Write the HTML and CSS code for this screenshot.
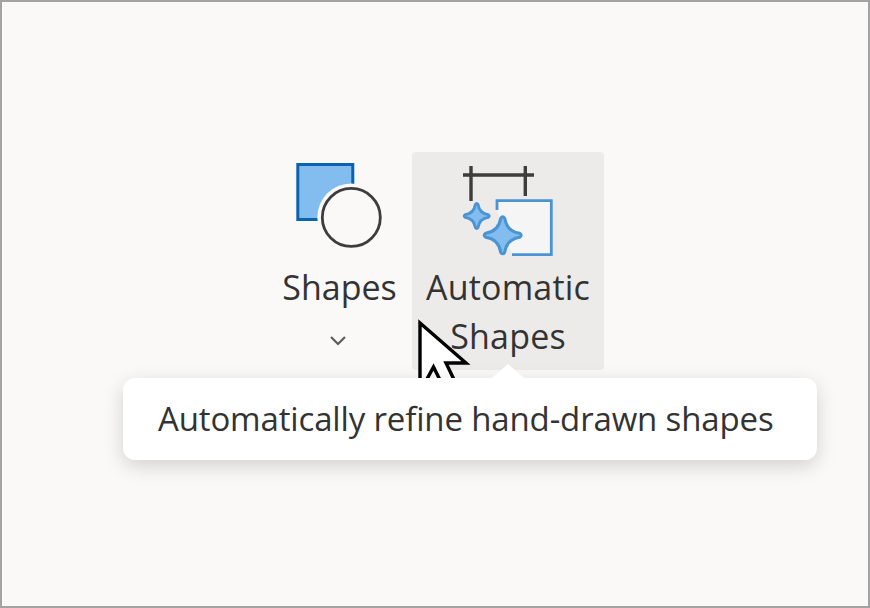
FILE: index.html
```html
<!DOCTYPE html>
<html lang="en">
<head>
    <meta charset="UTF-8">
    <title>Automatic Shapes</title>
    <link rel="stylesheet" href="styles.css">
</head>
<body>

<div class="frame">
    <!-- Ribbon buttons -->
    <div class="ribbon">
        <div class="ribbon-btn shapes-btn">
            <svg class="icon" width="88" height="88" viewBox="0 0 88 88">
                <rect x="1.8" y="2.5" width="55" height="55" fill="#83bcee" stroke="#0a63b0" stroke-width="3"/>
                <circle cx="55.3" cy="55.4" r="34" fill="#faf9f8"/>
                <circle cx="55.3" cy="55.4" r="29" fill="#faf9f8" stroke="#3d3d3d" stroke-width="2.8"/>
            </svg>
            <span class="label">Shapes</span>
            <svg class="chevron" width="18" height="12" viewBox="0 0 18 12">
                <path d="M2 2 L9 9 L16 2" fill="none" stroke="#5c5c5c" stroke-width="2.2"/>
            </svg>
        </div>
        <div class="ribbon-btn auto-btn">
            <svg class="icon" width="96" height="96" viewBox="0 0 96 96">
                <path d="M3 11 H74 M11 2 V37 M65.3 2 V32" fill="none" stroke="#3d3d3d" stroke-width="3.4"/>
                <path d="M37 46 V36.7 H91.3 V90.6 H52" fill="#f5f5f6" stroke="#4a94d2" stroke-width="2.8"/>
                <g fill="#83bcee" stroke="#4a94d2" stroke-linejoin="round">
                    <path transform="translate(16.7 52) scale(.68)" stroke-width="4.2" d="M-2 -17 Q0 -20 2 -17 Q4 -4 17 -2 Q20 0 17 2 Q4 4 2 17 Q0 20 -2 17 Q-4 4 -17 2 Q-20 0 -17 -2 Q-4 -4 -2 -17 Z"/>
                    <path transform="translate(42.7 71.3)" stroke-width="3" d="M-2 -17 Q0 -20 2 -17 Q4 -4 17 -2 Q20 0 17 2 Q4 4 2 17 Q0 20 -2 17 Q-4 4 -17 2 Q-20 0 -17 -2 Q-4 -4 -2 -17 Z"/>
                </g>
            </svg>
            <span class="label">Automatic Shapes</span>
        </div>
    </div>

    <!-- Mouse pointer, partly behind the tooltip -->
    <svg class="pointer" width="58" height="84" viewBox="0 0 58 84">
        <path d="M6 7 V76 L19.5 51 L34 80 L46 76 L32 47 L52 47 Z" fill="#fff" stroke="#000" stroke-width="3.4"/>
    </svg>

    <!-- Tooltip -->
    <div class="tooltip">Automatically refine hand-drawn shapes</div>
</div>

</body>
</html>
```

FILE: styles.css
```css
/* General styles */
html, body {
    margin: 0;
    padding: 0;
}

body {
    font-family: "Open Sans", sans-serif;
    color: #333;
}

/* Outer window */
.frame {
    position: relative;
    box-sizing: border-box;
    width: 870px;
    height: 608px;
    background-color: #faf9f8;
    border: 2px solid #a3a3a3;
    overflow: hidden;
}

/* Ribbon */
.ribbon {
    display: flex;
    gap: 8px;
    padding: 150px 0 0 274px;
}

.ribbon-btn {
    display: flex;
    flex-direction: column;
    align-items: center;
    box-sizing: border-box;
    height: 218px;
    border-radius: 4px;
}

.shapes-btn {
    width: 128px;
    padding-top: 10px;
}

.auto-btn {
    width: 192px;
    background-color: #edebe9;
    padding-top: 12px;
}

.icon {
    flex-shrink: 0;
}

.label {
    font-size: 34px;
    line-height: 49px;
    text-align: center;
    letter-spacing: 0.2px;
}

.shapes-btn .label {
    margin-top: 13px;
    margin-right: 1px;
    letter-spacing: 0;
}

.auto-btn .label {
    margin-top: 3px;
    width: 180px;
}

.chevron {
    margin-top: 23px;
    margin-right: 4px;
}

/* Tooltip */
.tooltip {
    position: absolute;
    left: 121px;
    top: 376px;
    width: 694px;
    height: 82px;
    box-sizing: border-box;
    padding-left: 35px;
    background-color: #fff;
    border-radius: 12px;
    box-shadow: 0 6px 20px rgba(0, 0, 0, 0.16);
    font-size: 33px;
    line-height: 82px;
    letter-spacing: -0.15px;
    white-space: nowrap;
}

.tooltip::before {
    content: "";
    position: absolute;
    left: 369px;
    top: -14px;
    width: 32px;
    height: 14px;
    background-color: #fff;
    clip-path: polygon(50% 0, 100% 100%, 0 100%);
}

/* Mouse pointer */
.pointer {
    position: absolute;
    left: 412px;
    top: 314px;
}
```
